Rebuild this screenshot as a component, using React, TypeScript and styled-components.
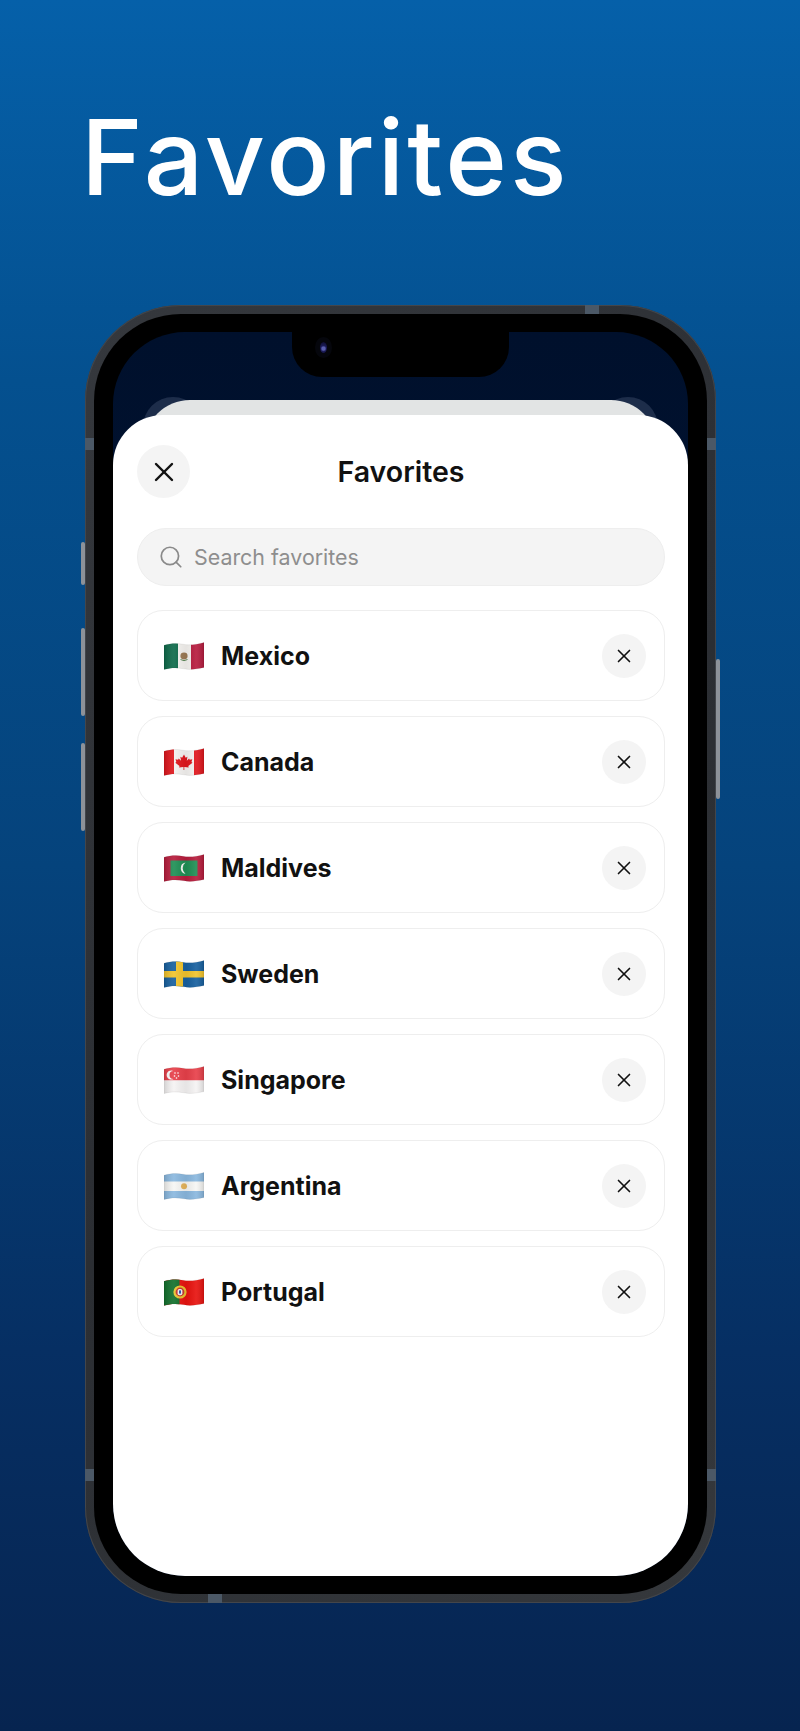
import React from 'react';
import styled, { createGlobalStyle } from 'styled-components';
import { Search, X } from 'lucide-react';

const GlobalStyle = createGlobalStyle`
  html, body {
    margin: 0;
    padding: 0;
  }
  body {
    width: 800px;
    height: 1731px;
    overflow: hidden;
    font-family: Inter, "Liberation Sans", sans-serif;
  }
`;

const Page = styled.div`
  width: 800px;
  height: 1731px;
  padding: 95px 0 0 85px;
  box-sizing: border-box;
  background: linear-gradient(180deg, #0560a9 0%, #04508f 22%, #05437c 50%, #062f63 78%, #062450 100%);
`;

const Heading = styled.h1`
  margin: 0 0 86px -4px;
  height: 124px;
  font-size: 105px;
  line-height: 124px;
  font-weight: 450;
  letter-spacing: 3.1px;
  color: #ffffff;
`;

const PhoneFrame = styled.div`
  position: relative;
  width: 631px;
  height: 1298px;
  padding: 9px;
  box-sizing: border-box;
  border-radius: 96px;
  background: linear-gradient(135deg, #35383d, #2b2e33 50%, #35383c);
  box-shadow: inset 0 0 0 1px #43464b;
`;

const Bezel = styled.div`
  height: 100%;
  padding: 18px 19px;
  box-sizing: border-box;
  border-radius: 87px;
  background: #000000;
`;

const SideButton = styled.span<{ $side: 'left' | 'right'; $top: number; $height: number }>`
  position: absolute;
  top: ${(p) => p.$top}px;
  ${(p) => p.$side}: -4px;
  width: 4px;
  height: ${(p) => p.$height}px;
  border-radius: 2px;
  background: #8d9299;
`;

const Band = styled.span<{ $vertical: boolean }>`
  position: absolute;
  width: ${(p) => (p.$vertical ? 9 : 14)}px;
  height: ${(p) => (p.$vertical ? 12 : 9)}px;
  background: #4b5866;
`;

const Screen = styled.div`
  position: relative;
  display: flex;
  flex-direction: column;
  height: 100%;
  padding-top: 68px;
  box-sizing: border-box;
  overflow: hidden;
  border-radius: 72px;
  background: linear-gradient(180deg, #00102c, #021a3f);
`;

const Notch = styled.div`
  position: absolute;
  top: 0;
  left: 179px;
  width: 217px;
  height: 45px;
  border-radius: 0 0 30px 30px;
  background: #000000;
`;

const Speaker = styled.span`
  position: absolute;
  top: -19px;
  left: 61px;
  width: 95px;
  height: 9px;
  box-sizing: border-box;
  border: 1px solid #26282b;
  border-radius: 0 0 4px 4px;
  background: #0d0e10;
`;

const Camera = styled.span`
  position: absolute;
  top: 10px;
  left: 28px;
  width: 7px;
  height: 11px;
  border-radius: 50%;
  background: radial-gradient(circle at 50% 60%, #5a5fb0 0 1.5px, #1a1a55 3px, #0b0b28 100%);
  box-shadow: 0 0 0 5px #05060c;
`;

const PeekCircle = styled.span<{ $side: 'left' | 'right' }>`
  position: absolute;
  top: 65px;
  ${(p) => p.$side}: 30px;
  width: 60px;
  height: 60px;
  border-radius: 50%;
  background: #1d2d4a;
`;

const BackSheet = styled.div`
  position: relative;
  flex: none;
  height: 60px;
  margin: 0 31px -45px;
  border-radius: 46px 46px 0 0;
  background: #e2e4e4;
`;

const Sheet = styled.div`
  position: relative;
  flex: 1;
  padding: 30px 23px 0 24px;
  border-radius: 50px 50px 0 0;
  background: #ffffff;
`;

const SheetHeader = styled.div`
  position: relative;
  display: flex;
  align-items: center;
  justify-content: center;
  height: 53px;
  margin-bottom: 30px;
`;

const SheetTitle = styled.h2`
  margin: 0;
  font-size: 28.5px;
  font-weight: 600;
  color: #111111;
`;

const CloseButton = styled.button`
  position: absolute;
  left: 0;
  top: 0;
  display: flex;
  align-items: center;
  justify-content: center;
  width: 53px;
  height: 53px;
  padding: 0;
  border: 0;
  border-radius: 50%;
  background: #f4f4f4;
  color: #111111;
`;

const SearchBar = styled.div`
  display: flex;
  align-items: center;
  gap: 10px;
  height: 58px;
  padding: 0 20px;
  box-sizing: border-box;
  margin-bottom: 24px;
  border: 1px solid #eeeeee;
  border-radius: 29px;
  background: #f4f4f4;
  color: #8a8a8a;
`;

const SearchText = styled.span`
  font-size: 21.4px;
  color: #8e8e8e;
`;

const List = styled.div`
  display: flex;
  flex-direction: column;
  gap: 15px;
`;

const Row = styled.div`
  display: flex;
  align-items: center;
  height: 91px;
  padding: 0 18px 0 26px;
  box-sizing: border-box;
  border: 1.5px solid #eeeeee;
  border-radius: 26px;
`;

const RowName = styled.span`
  flex: 1;
  margin-left: 17px;
  font-size: 25px;
  font-weight: 700;
  color: #111111;
`;

const RemoveButton = styled.button`
  display: flex;
  align-items: center;
  justify-content: center;
  width: 44px;
  height: 44px;
  padding: 0;
  border: 0;
  border-radius: 50%;
  background: #f4f4f4;
  color: #111111;
`;

const FlagSvg = styled.svg`
  flex: none;
  display: block;
`;

const LEAF =
  'M20 6.5l1.7 3.2 1.7-.9-.6 4 2.3-2.4.6 1.4 2.6-.5-.8 2.8 1 .6-4.2 3.4.4 1.4-4-.5-.4 0v3h-.8v-3l-.4 0-4 .5.4-1.4-4.2-3.4 1-.6-.8-2.8 2.6.5.6-1.4 2.3 2.4-.6-4 1.7.9z';

const flags: Record<string, React.ReactNode> = {
  Mexico: (
    <>
      <rect width="14" height="28" fill="#0d6a4a" />
      <rect x="14" width="13" height="28" fill="#f4f2ef" />
      <rect x="27" width="13" height="28" fill="#b71c3f" />
      <ellipse cx="20" cy="14" rx="3.6" ry="3.4" fill="#9b7a55" />
      <path d="M16.5 17.5q3.5 2.4 7 0" fill="none" stroke="#5f8a5a" strokeWidth="1" />
    </>
  ),
  Canada: (
    <>
      <rect width="40" height="28" fill="#f4f2f0" />
      <rect width="10" height="28" fill="#e0161c" />
      <rect x="30" width="10" height="28" fill="#e0161c" />
      <path d={LEAF} fill="#e0161c" />
    </>
  ),
  Maldives: (
    <>
      <rect width="40" height="28" fill="#b71c3c" />
      <rect x="6.5" y="6.5" width="27" height="15.5" fill="#1f8f55" />
      <path d="M21.5 8.6a5.8 5.8 0 0 0 0 11.4a7.2 7.2 0 0 1 0-11.4z" fill="#f4f4f0" />
    </>
  ),
  Sweden: (
    <>
      <rect width="40" height="28" fill="#17609f" />
      <rect x="12" width="7" height="28" fill="#f2c42c" />
      <rect y="11" width="40" height="6.5" fill="#f2c42c" />
    </>
  ),
  Singapore: (
    <>
      <rect width="40" height="14.5" fill="#e8404a" />
      <rect y="14.5" width="40" height="14" fill="#f5f3f3" />
      <path d="M9.5 5a4.6 4.6 0 1 0 0 8a4 4 0 0 1 0-8z" fill="#fff" />
      <circle cx="11" cy="7" r=".8" fill="#fff" />
      <circle cx="14" cy="7" r=".8" fill="#fff" />
      <circle cx="10.5" cy="10" r=".8" fill="#fff" />
      <circle cx="14.5" cy="10" r=".8" fill="#fff" />
      <circle cx="12.5" cy="12" r=".8" fill="#fff" />
    </>
  ),
  Argentina: (
    <>
      <rect width="40" height="28" fill="#8ab8df" />
      <rect y="9.5" width="40" height="9.5" fill="#f6f6f4" />
      <circle cx="20" cy="14.2" r="3" fill="#e5b45c" />
    </>
  ),
  Portugal: (
    <>
      <rect width="40" height="28" fill="#e8130f" />
      <rect width="15.5" height="28" fill="#12702c" />
      <circle cx="16" cy="14" r="6.6" fill="#e9c22e" />
      <circle cx="16" cy="14" r="4.4" fill="#c9342c" />
      <rect x="13.6" y="11" width="4.8" height="6.2" rx="1.8" fill="#f3f3f3" />
      <rect x="15" y="12.4" width="2" height="3.2" fill="#2f55a8" />
    </>
  ),
};

const WAVE =
  'M0 3.2C6 1.4 13 .9 19 2.2C26 3.6 33 2.2 40 .4V25.6C33 27 26 28.2 20 26.8C13 25.4 6 25.6 0 27.6Z';

const Flag = ({ name }: { name: string }) => (
  <FlagSvg width="40" height="28" viewBox="0 0 40 28">
    <defs>
      <clipPath id={`wave-${name}`}>
        <path d={WAVE} />
      </clipPath>
      <linearGradient id={`shade-${name}`} x1="0" x2="1" y1="0" y2="0">
        <stop offset="0" stopColor="#000" stopOpacity=".14" />
        <stop offset=".25" stopColor="#fff" stopOpacity=".08" />
        <stop offset=".55" stopColor="#000" stopOpacity=".06" />
        <stop offset=".8" stopColor="#fff" stopOpacity=".08" />
        <stop offset="1" stopColor="#000" stopOpacity=".14" />
      </linearGradient>
    </defs>
    <g clipPath={`url(#wave-${name})`}>
      {flags[name]}
      <rect width="40" height="28" fill={`url(#shade-${name})`} />
    </g>
    <path d={WAVE} fill="none" stroke="#000" strokeOpacity=".12" strokeWidth=".5" />
  </FlagSvg>
);

const countries = ['Mexico', 'Canada', 'Maldives', 'Sweden', 'Singapore', 'Argentina', 'Portugal'];

const App = () => (
  <Page>
    <GlobalStyle />
    <Heading>Favorites</Heading>
    <PhoneFrame>
      <SideButton $side="left" $top={237} $height={43} />
      <SideButton $side="left" $top={323} $height={88} />
      <SideButton $side="left" $top={438} $height={88} />
      <SideButton $side="right" $top={354} $height={140} />
      <Band $vertical style={{ left: 0, top: 133 }} />
      <Band $vertical style={{ right: 0, top: 133 }} />
      <Band $vertical style={{ left: 0, top: 1164 }} />
      <Band $vertical style={{ right: 0, top: 1164 }} />
      <Band $vertical={false} style={{ left: 123, bottom: 0 }} />
      <Band $vertical={false} style={{ left: 500, top: 0 }} />
      <Bezel>
        <Screen>
          <PeekCircle $side="left" />
          <PeekCircle $side="right" />
          <Notch>
            <Speaker />
            <Camera />
          </Notch>
          <BackSheet />
          <Sheet>
            <SheetHeader>
              <CloseButton>
                <X size={32} strokeWidth={1.8} />
              </CloseButton>
              <SheetTitle>Favorites</SheetTitle>
            </SheetHeader>
            <SearchBar>
              <Search size={26} strokeWidth={1.6} />
              <SearchText>Search favorites</SearchText>
            </SearchBar>
            <List>
              {countries.map((name) => (
                <Row key={name}>
                  <Flag name={name} />
                  <RowName>{name}</RowName>
                  <RemoveButton>
                    <X size={22} strokeWidth={1.8} />
                  </RemoveButton>
                </Row>
              ))}
            </List>
          </Sheet>
        </Screen>
      </Bezel>
    </PhoneFrame>
  </Page>
);

export default App;
